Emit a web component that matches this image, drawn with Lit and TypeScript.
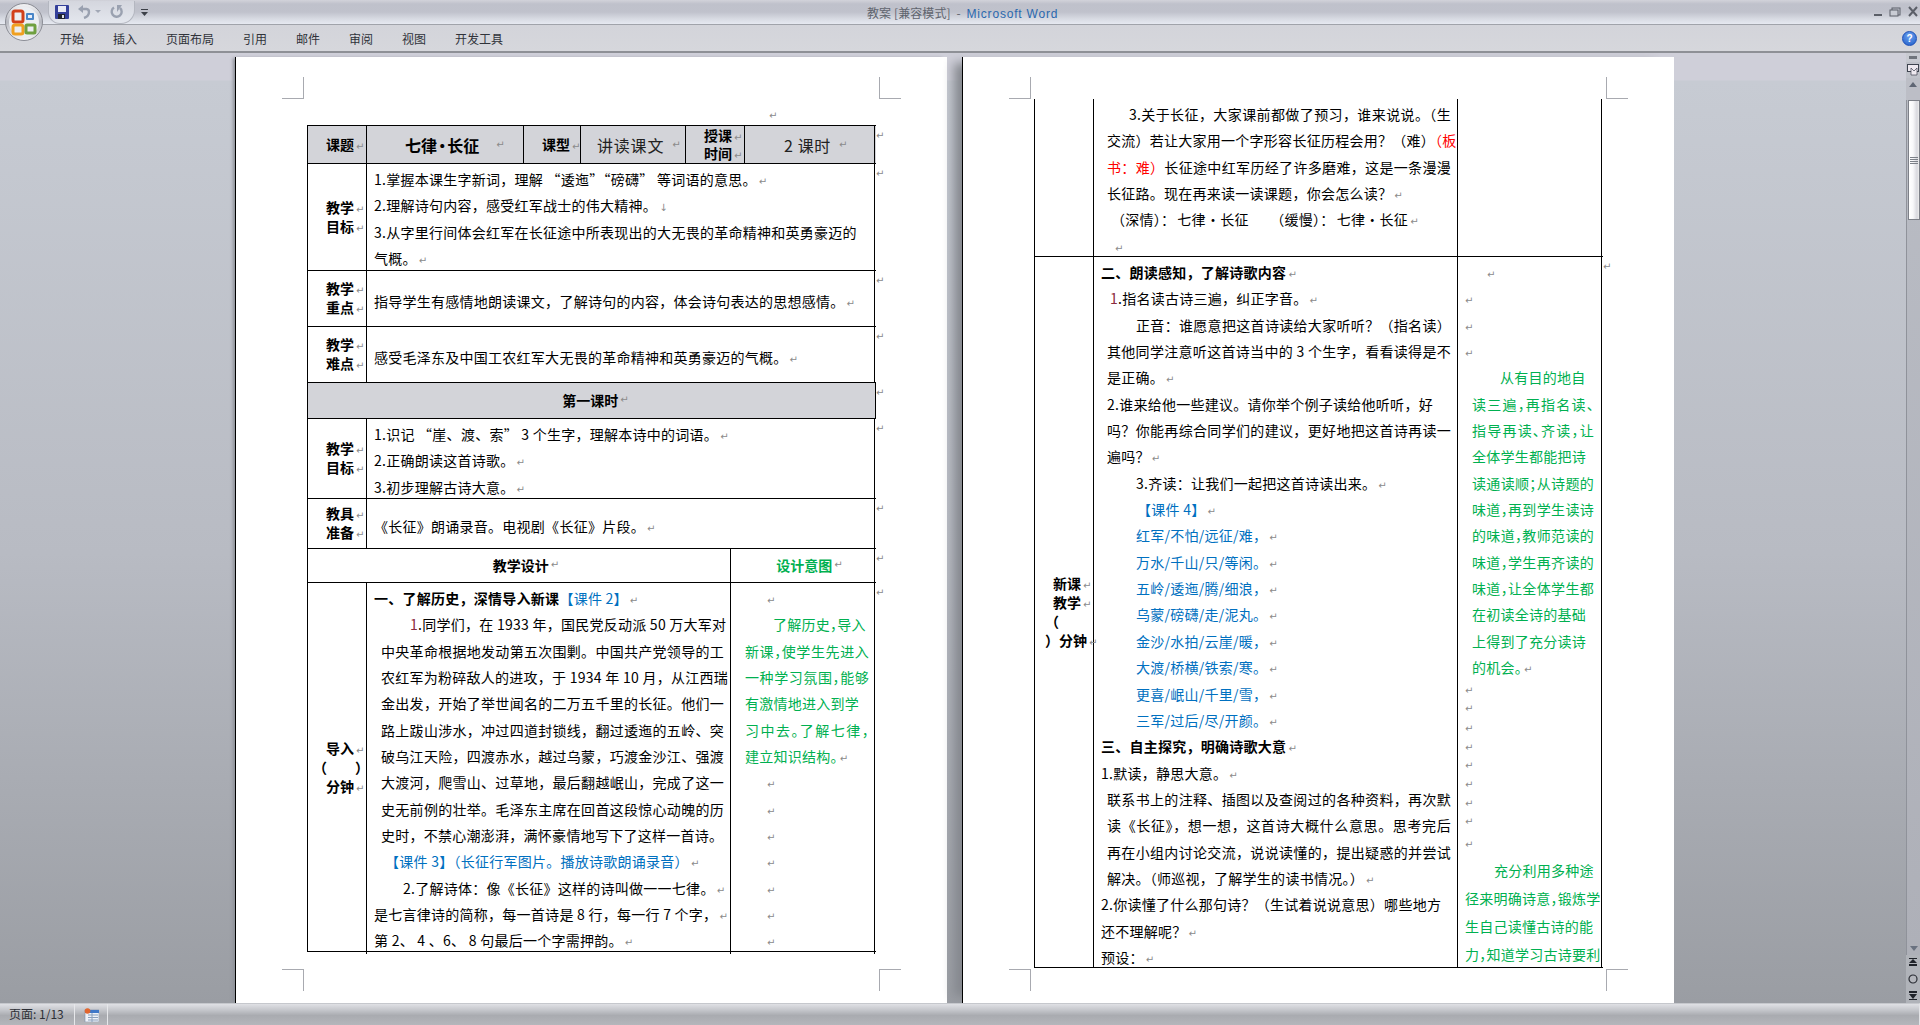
import { LitElement, css, html, nothing, TemplateResult } from "lit";
import { customElement } from "lit/decorators.js";

type Line = {
  t?: unknown;
  x?: number; // left offset inside the cell
  c?: string; // colour class
  j?: boolean; // stretched to the cell's right edge
  m?: boolean; // paragraph mark at the end
  y?: number; // own line height
};

const mark = html`<span class="m">↵</span>`;
const red1 = html`<span class="num">1</span>`;
const blue = (s: string) => html`<span class="blue">${s}</span>`;
const red = (s: string) => html`<span class="red">${s}</span>`;
const poem = html`<span class="poem2">七律 · 长征</span>`;

const rows1Left: Line[] = [
  { t: html`<b>一、了解历史，深情导入新课</b>${blue("【课件 2】")}`, m: true },
  { t: html`${red1}.同学们，在 1933 年，国民党反动派 50 万大军对`, x: 36 },
  { t: "中央革命根据地发动第五次围剿。中国共产党领导的工", x: 7, j: true },
  { t: "农红军为粉碎敌人的进攻，于 1934 年 10 月，从江西瑞", x: 7, j: true },
  { t: "金出发，开始了举世闻名的二万五千里的长征。他们一", x: 7, j: true },
  { t: "路上跋山涉水，冲过四道封锁线，翻过逶迤的五岭、突", x: 7, j: true },
  { t: "破乌江天险，四渡赤水，越过乌蒙，巧渡金沙江、强渡", x: 7, j: true },
  { t: "大渡河，爬雪山、过草地，最后翻越岷山，完成了这一", x: 7, j: true },
  { t: "史无前例的壮举。毛泽东主席在回首这段惊心动魄的历", x: 7, j: true },
  { t: "史时，不禁心潮澎湃，满怀豪情地写下了这样一首诗。", x: 7 },
  { t: "【课件 3】（长征行军图片。播放诗歌朗诵录音）", x: 11, c: "blue", m: true },
  { t: "2.了解诗体：像《长征》这样的诗叫做一一七律。", x: 29, m: true },
  { t: "是七言律诗的简称，每一首诗是 8 行，每一行 7 个字，", m: true },
  { t: "第 2、 4 、6、 8 句最后一个字需押韵。", m: true },
];

const rows1Right: Line[] = [
  { x: 20, m: true },
  { t: "了解历史，导入", x: 28, c: "green" },
  { t: "新课，使学生先进入", c: "green", j: true },
  { t: "一种学习氛围，能够", c: "green", j: true },
  { t: "有激情地进入到学", c: "green" },
  { t: "习中去。了解七律，", c: "green", j: true },
  { t: "建立知识结构。", c: "green", m: true },
  { x: 20, m: true },
  { x: 20, m: true },
  { x: 20, m: true },
  { x: 20, m: true },
  { x: 20, m: true },
  { x: 20, m: true },
  { x: 20, m: true },
];

const rows2Top: Line[] = [
  { t: "3.关于长征，大家课前都做了预习，谁来说说。（生", x: 28, j: true },
  { t: html`交流）若让大家用一个字形容长征历程会用？（难）${red("（板")}`, x: 6, j: true },
  { t: html`${red("书：难）")}长征途中红军历经了许多磨难，这是一条漫漫`, x: 6, j: true },
  { t: "长征路。现在再来读一读课题，你会怎么读？", x: 6, m: true },
  { t: html`（深情）：${poem}　&#8194;（缓慢）：${poem}`, x: 10, m: true },
  { x: 12, m: true },
];

const rows2Left: Line[] = [
  { t: html`<b>二、朗读感知，了解诗歌内容</b>`, m: true },
  { t: html`${red1}.指名读古诗三遍，纠正字音。`, x: 9, m: true },
  { t: "正音：谁愿意把这首诗读给大家听听？（指名读）", x: 35, j: true },
  { t: "其他同学注意听这首诗当中的 3 个生字，看看读得是不", x: 6, j: true },
  { t: "是正确。", x: 6, m: true },
  { t: "2.谁来给他一些建议。请你举个例子读给他听听，好", x: 6 },
  { t: "吗？你能再综合同学们的建议，更好地把这首诗再读一", x: 6, j: true },
  { t: "遍吗？", x: 6, m: true },
  { t: "3.齐读：让我们一起把这首诗读出来。", x: 35, m: true },
  { t: "【课件 4】", x: 36, c: "blue", m: true },
  { t: "红军/不怕/远征/难，", x: 35, c: "blue", m: true },
  { t: "万水/千山/只/等闲。", x: 35, c: "blue", m: true },
  { t: "五岭/逶迤/腾/细浪，", x: 35, c: "blue", m: true },
  { t: "乌蒙/磅礴/走/泥丸。", x: 35, c: "blue", m: true },
  { t: "金沙/水拍/云崖/暖，", x: 35, c: "blue", m: true },
  { t: "大渡/桥横/铁索/寒。", x: 35, c: "blue", m: true },
  { t: "更喜/岷山/千里/雪，", x: 35, c: "blue", m: true },
  { t: "三军/过后/尽/开颜。", x: 35, c: "blue", m: true },
  { t: html`<b>三、自主探究，明确诗歌大意</b>`, m: true },
  { t: "1.默读，静思大意。", m: true },
  { t: "联系书上的注释、插图以及查阅过的各种资料，再次默", x: 6, j: true },
  { t: "读《长征》，想一想，这首诗大概什么意思。思考完后", x: 6, j: true },
  { t: "再在小组内讨论交流，说说读懂的，提出疑惑的并尝试", x: 6, j: true },
  { t: "解决。（师巡视，了解学生的读书情况。）", x: 6, m: true },
  { t: "2.你读懂了什么那句诗？（生试着说说意思）哪些地方" },
  { t: "还不理解呢？", m: true },
  { t: "预设：", m: true },
];

const rows2Right: Line[] = [
  { x: 23, m: true },
  { x: 1, m: true },
  { x: 1, m: true },
  { x: 1, m: true },
  { t: "从有目的地自", x: 38, c: "green" },
  { t: "读三遍，再指名读、", x: 10, c: "green", j: true },
  { t: "指导再读、齐读，让", x: 10, c: "green", j: true },
  { t: "全体学生都能把诗", x: 10, c: "green" },
  { t: "读通读顺；从诗题的", x: 10, c: "green", j: true },
  { t: "味道，再到学生读诗", x: 10, c: "green", j: true },
  { t: "的味道，教师范读的", x: 10, c: "green", j: true },
  { t: "味道，学生再齐读的", x: 10, c: "green", j: true },
  { t: "味道，让全体学生都", x: 10, c: "green", j: true },
  { t: "在初读全诗的基础", x: 10, c: "green" },
  { t: "上得到了充分读诗", x: 10, c: "green" },
  { t: "的机会。", x: 10, c: "green", m: true },
  { x: 1, m: true, y: 15 },
  { x: 1, m: true, y: 21 },
  { x: 1, m: true, y: 19 },
  { x: 1, m: true, y: 18 },
  { x: 1, m: true, y: 19 },
  { x: 1, m: true, y: 19 },
  { x: 1, m: true, y: 18 },
  { x: 1, m: true, y: 19 },
  { x: 1, m: true, y: 27 },
  { t: "充分利用多种途", x: 32, c: "green", y: 28 },
  { t: "径来明确诗意，锻炼学", x: 3, c: "green", y: 28 },
  { t: "生自己读懂古诗的能", x: 3, c: "green", y: 28 },
  { t: "力，知道学习古诗要利", x: 3, c: "green", y: 28 },
];

function lines(items: Line[]): TemplateResult {
  return html`${items.map(
    (l) => html`<div
      class="ln ${l.c ?? ""} ${l.j ? "j" : ""}"
      style="padding-left:${l.x ?? 0}px;${l.y ? `line-height:${l.y}px;height:${l.y}px` : ""}"
    >${l.t ?? nothing}${l.m ? mark : nothing}</div>`
  )}`;
}

@customElement("app-root")
export class AppRoot extends LitElement {
  private titleBar() {
    return html`
      <div class="titlebar">
        <div class="qat">
          <svg width="14" height="14" viewBox="0 0 14 14">
            <rect width="14" height="14" rx="1" fill="#34409a" />
            <rect x="3" y="1" width="8" height="6" fill="#e9ebf5" />
            <rect x="3" y="9" width="7" height="5" fill="#20242e" />
            <rect x="7" y="10" width="2" height="3" fill="#dfe2ea" />
          </svg>
          <svg class="undo" width="13" height="14" viewBox="0 0 13 14">
            <path d="M0 4l5-4v8z" fill="#9aa1b0" />
            <path d="M4 4h4.500a3 3 0 0 1 2.500 3c0 3-2 5-5 6" fill="none" stroke="#9aa1b0" stroke-width="2.400" />
          </svg>
          <span class="qat-drop"></span>
          <svg class="redo" width="13" height="14" viewBox="0 0 13 14">
            <path d="M4 2.500a5 5 0 1 0 6 .5" fill="none" stroke="#9aa1b0" stroke-width="2.400" />
            <path d="M7 0v7l5-7z" fill="#9aa1b0" />
          </svg>
        </div>
        <svg class="customize" width="7" height="7" viewBox="0 0 7 7">
          <rect y="0" width="7" height="1" fill="#3c4048" />
          <path d="M0 3h7L3.500 7z" fill="#3c4048" />
        </svg>
        <div class="caption">教案 [兼容模式] <span class="spacer">-</span> <span class="app">Microsoft Word</span></div>
        <div class="winbtns">
          <svg width="46" height="12" viewBox="0 0 46 12">
            <rect x="1" y="8" width="8" height="2" fill="#5b5f68" />
            <rect x="19" y="2" width="8" height="7" fill="none" stroke="#5b5f68" />
            <rect x="17" y="4" width="8" height="6" fill="#c9ccd4" stroke="#5b5f68" />
            <path d="M36 1l8 9M44 1l-8 9" stroke="#5b5f68" stroke-width="2" fill="none" />
          </svg>
        </div>
      </div>
    `;
  }

  private ribbon() {
    const tabs = ["开始", "插入", "页面布局", "引用", "邮件", "审阅", "视图", "开发工具"];
    return html`
      <div class="ribbon">
        ${tabs.map((t) => html`<span class="tab">${t}</span>`)}
        <span class="help">?</span>
      </div>
      <svg class="orb" width="38" height="38" viewBox="0 0 38 38">
        <defs>
          <linearGradient id="orbg" x1="0" y1="0" x2="0" y2="1">
            <stop offset="0" stop-color="#f4f4f6" />
            <stop offset=".5" stop-color="#b8bac2" />
            <stop offset="1" stop-color="#f6f6f8" />
          </linearGradient>
        </defs>
        <circle cx="19" cy="19" r="18.500" fill="url(#orbg)" stroke="#8a8c94" />
        <circle cx="19" cy="19" r="15" fill="#eceef2" />
        <rect x="8" y="8" width="10" height="11" rx="2" fill="none" stroke="#d2401a" stroke-width="3" />
        <rect x="21" y="10" width="8" height="7" rx="1" fill="#4a86c8" />
        <rect x="8" y="22" width="10" height="9" rx="2" fill="none" stroke="#f0a020" stroke-width="3" />
        <rect x="21" y="22" width="9" height="8" rx="1" fill="none" stroke="#6fa040" stroke-width="3" />
        <rect x="23" y="12" width="4" height="3" fill="#e8eef8" />
      </svg>
    `;
  }

  private scrollbar() {
    return html`
      <div class="sbar">
        <span class="sb-split"></span>
        <span class="sb-view">
          <svg width="12" height="12" viewBox="0 0 12 12">
            <rect x=".5" y=".5" width="11" height="7" fill="#eee9f0" stroke="#3f4450" />
            <path d="M4 4l3 3 3-3v7H4z" fill="#eee9f0" stroke="#3f4450" stroke-width=".7" />
          </svg>
        </span>
        <span class="sb-up"></span>
        <div class="sb-track">
          <div class="sb-thumb"><span class="grip"></span></div>
          <span class="sb-down"></span>
        </div>
        <div class="sb-nav">
          <svg width="8" height="9" viewBox="0 0 8 9"><path d="M0 0h8v1H0zM4 1l4 4H0zM0 6h8v2H0z" fill="#20232a" /></svg>
          <svg width="10" height="10" viewBox="0 0 10 10"><circle cx="5" cy="5" r="4" fill="#b4b6bc" stroke="#2a2d34" stroke-width="1.2" /></svg>
          <svg width="8" height="9" viewBox="0 0 8 9"><path d="M0 0h8v2H0zM0 3h8L4 8zM0 8h8v1H0z" fill="#20232a" /></svg>
        </div>
      </div>
    `;
  }

  private cornerMarks(cls: string) {
    return html`<div class="marks ${cls}"><i></i><i></i></div>`;
  }

  private pageOne() {
    return html`
      <div class="page first">
        ${this.cornerMarks("top")}
        <div class="lead">${mark}</div>
        <div class="tbl">
          <div class="tr r1 gray" style="height:38px">
            <div class="td lab"><span>课题${mark}</span></div>
            <div class="td title16"><b class="poem">七律 · 长征</b>${mark}</div>
            <div class="td lab"><span>课型${mark}</span></div>
            <div class="td big">讲读课文 ${mark}</div>
            <div class="td lab time"><span>授课${mark}</span><span>时间${mark}</span></div>
            <div class="td big mid">2 课时 ${mark}</div>
            <span class="rm">↵</span>
          </div>
          <div class="tr r2" style="height:107px">
            <div class="td lab"><span>教学${mark}</span><span>目标${mark}</span></div>
            <div class="td txt pt">
              ${lines([
                { t: "1.掌握本课生字新词，理解 “逶迤”“磅礴” 等词语的意思。", m: true },
                { t: html`2.理解诗句内容，感受红军战士的伟大精神。<span class="m">↓</span>` },
                { t: "3.从字里行间体会红军在长征途中所表现出的大无畏的革命精神和英勇豪迈的" },
                { t: "气概。", m: true },
              ])}
            </div>
            <span class="rm">↵</span>
          </div>
          <div class="tr r2" style="height:56px">
            <div class="td lab"><span>教学${mark}</span><span>重点${mark}</span></div>
            <div class="td txt one">${lines([{ t: "指导学生有感情地朗读课文，了解诗句的内容，体会诗句表达的思想感情。", m: true }])}</div>
            <span class="rm">↵</span>
          </div>
          <div class="tr r2" style="height:56px">
            <div class="td lab"><span>教学${mark}</span><span>难点${mark}</span></div>
            <div class="td txt one">${lines([{ t: "感受毛泽东及中国工农红军大无畏的革命精神和英勇豪迈的气概。", m: true }])}</div>
            <span class="rm">↵</span>
          </div>
          <div class="tr gray" style="height:36px">
            <div class="td center lesson"><b>第一课时</b>${mark}</div>
            <span class="rm">↵</span>
          </div>
          <div class="tr r2" style="height:80px">
            <div class="td lab"><span>教学${mark}</span><span>目标${mark}</span></div>
            <div class="td txt pt">
              ${lines([
                { t: "1.识记 “崖、渡、索” 3 个生字，理解本诗中的词语。", m: true },
                { t: "2.正确朗读这首诗歌。", m: true },
                { t: "3.初步理解古诗大意。", m: true },
              ])}
            </div>
            <span class="rm">↵</span>
          </div>
          <div class="tr r2" style="height:50px">
            <div class="td lab"><span>教具${mark}</span><span>准备${mark}</span></div>
            <div class="td txt one">${lines([{ t: "《长征》朗诵录音。电视剧《长征》片段。", m: true }])}</div>
            <span class="rm">↵</span>
          </div>
          <div class="tr r3" style="height:34px">
            <div class="td center design"><b>教学设计</b>${mark}</div>
            <div class="td center design greenhead"><b>设计意图</b>${mark}</div>
            <span class="rm">↵</span>
          </div>
          <div class="tr r4" style="height:369px">
            <div class="td lab">
              <span>导入${mark}</span>
              <span class="paren">（　　）</span>
              <span>分钟${mark}</span>
            </div>
            <div class="td txt pt">${lines(rows1Left)}</div>
            <div class="td txt pt side">${lines(rows1Right)}</div>
            <span class="rm">↵</span>
          </div>
        </div>
        ${this.cornerMarks("bottom b1")}
      </div>
    `;
  }

  private pageTwo() {
    return html`
      <div class="page">
        ${this.cornerMarks("top")}
        <div class="lead tight"></div>
        <div class="tbl notop">
          <div class="tr r4" style="height:158px">
            <div class="td"></div>
            <div class="td txt pt">${lines(rows2Top)}</div>
            <div class="td"></div>
          </div>
          <div class="tr r4" style="height:711px">
            <div class="td lab">
              <span>新课${mark}</span>
              <span>教学${mark}</span>
              <span class="paren2">（</span>
              <span class="paren2">）分钟${mark}</span>
            </div>
            <div class="td txt pt">${lines(rows2Left)}</div>
            <div class="td txt pt side2">${lines(rows2Right)}</div>
            <span class="rm">↵</span>
          </div>
        </div>
        ${this.cornerMarks("bottom b2")}
      </div>
    `;
  }

  render() {
    return html`
      ${this.titleBar()} ${this.ribbon()}
      <div class="work">
        <div class="pages">${this.pageOne()} ${this.pageTwo()}</div>
        ${this.scrollbar()}
      </div>
      <div class="status">
        <span class="st-page">页面: 1/13</span>
        <span class="st-icon">
          <svg width="15" height="14" viewBox="0 0 15 14">
            <rect x="1" y="2" width="14" height="12" fill="#eef2f8" stroke="#7d8ea8" stroke-width=".6" />
            <rect x="1" y="2" width="14" height="3" fill="#3f78c8" />
            <path d="M4 7h10M4 9.500h10M4 12h10M8 5v9" stroke="#8aa0bc" stroke-width="1" />
            <circle cx="3.500" cy="3" r="2.800" fill="#e2662e" />
          </svg>
        </span>
      </div>
    `;
  }

  static styles = css`
    :host {
      display: flex;
      flex-direction: column;
      width: 1920px;
      height: 1025px;
      overflow: hidden;
      position: relative;
      font-family: "Noto Sans CJK SC", "Liberation Sans", sans-serif;
      font-size: 14px;
      color: #000;
      background: #c7cbd3;
    }

    .titlebar {
      height: 24px;
      flex: none;
      display: flex;
      align-items: center;
      padding-left: 48px;
      background: linear-gradient(180deg, #d2d3da 0, #bfc1cb 4px, #c0c2cc 12px, #d8dbe3 19px, #e6e9f1 24px);
      border-bottom: 1px solid #a0a3aa;
      font-size: 12px;
    }

    .qat {
      width: 87px;
      height: 23px;
      box-sizing: border-box;
      display: flex;
      align-items: center;
      padding-left: 6px;
      background: linear-gradient(180deg, #d4d6de, #e4e7ee);
      border: 1px solid #b4b7c0;
      border-top: none;
      border-radius: 0 0 14px 12px;
      flex: none;
    }
    .undo {
      margin-left: 9px;
    }
    .redo {
      margin-left: 9px;
    }
    .qat-drop {
      border-left: 3px solid transparent;
      border-right: 3px solid transparent;
      border-top: 3px solid #a2a8b6;
      margin-left: 4px;
    }
    .customize {
      margin-left: 6px;
      flex: none;
    }
    .caption {
      margin-left: 719px;
      color: #5f646e;
      white-space: nowrap;
      letter-spacing: 0.1px;
    }
    .spacer {
      margin: 0 3px;
    }
    .app {
      color: #2a68ae;
      font-family: "Liberation Sans", sans-serif;
      letter-spacing: 0.8px;
    }
    .winbtns {
      margin-left: auto;
      margin-right: 1px;
      display: flex;
    }

    .ribbon {
      height: 26px;
      flex: none;
      display: flex;
      align-items: center;
      padding: 0 3px 0 60px;
      background: linear-gradient(180deg, #d3d4da, #d6d7dc);
      border-bottom: 2px solid #8e9096;
      font-size: 12px;
      color: #30333a;
    }
    .tab {
      margin-right: 29px;
      white-space: nowrap;
    }
    .help {
      margin-left: auto;
      width: 13px;
      height: 13px;
      border-radius: 50%;
      border: 1px solid #1c4fb8;
      background: radial-gradient(circle at 50% 30%, #6fa4f0, #1f5cc8);
      color: #fff;
      font: 700 10px/13px "Liberation Sans", sans-serif;
      text-align: center;
    }
    .orb {
      position: absolute;
      left: 5px;
      top: 3px;
    }

    .work {
      height: 950px;
      flex: none;
      display: flex;
      overflow: hidden;
      background: linear-gradient(180deg, #cfcfd9 0, #cfcfd9 27px, #c7cbd3 28px, #b8bbc3 500px, #9a9da3 950px);
    }
    .pages {
      flex: 1;
      display: flex;
      gap: 16px;
      padding: 4px 0 0 236px;
      min-width: 0;
    }
    .page {
      width: 711px;
      height: 946px;
      flex: none;
      background: #fff;
      overflow: hidden;
      box-shadow: -1px 0 0 #000, -4px 0 3px -1px #8e9198;
      position: relative;
    }
    .page + .page {
      box-shadow: -1px 0 0 #000, -15px 0 10px -6px #85888e;
    }

    .marks {
      display: flex;
      justify-content: space-between;
      height: 21px;
      margin: 20px 46px 0;
    }
    .marks i {
      width: 21px;
      height: 21px;
      border: 0 solid #a8aab0;
    }
    .marks.top i:first-child {
      border-width: 0 1px 1px 0;
    }
    .marks.top i:last-child {
      border-width: 0 0 1px 1px;
    }
    .marks.bottom i:first-child {
      border-width: 1px 1px 0 0;
    }
    .marks.bottom i:last-child {
      border-width: 1px 0 0 1px;
    }
    .marks.b1 {
      margin-top: 17px;
    }
    .marks.b2 {
      margin-top: 1px;
    }

    .lead {
      height: 27px;
      padding: 5px 0 0 531px;
      box-sizing: border-box;
    }
    .lead.tight {
      height: 1px;
      padding: 0;
    }

    .tbl {
      margin-left: 71px;
      width: 568px;
      border: solid #000;
      border-width: 1px 0 0 1px;
    }
    .tbl.notop {
      border-top-width: 0;
    }
    .tr {
      display: grid;
      box-sizing: border-box;
      border-bottom: 1px solid #000;
      position: relative;
    }
    .r1 {
      grid-template-columns: 59px 157px 57px 105px 59px 130px;
    }
    .r2 {
      grid-template-columns: 59px 508px;
    }
    .r3 {
      grid-template-columns: 423px 144px;
    }
    .r4 {
      grid-template-columns: 59px 364px 144px;
    }
    .gray {
      background: #d3d4d9;
    }
    .td {
      border-right: 1px solid #000;
      min-width: 0;
      white-space: nowrap;
      overflow: hidden;
    }
    .r4 .td:last-of-type {
      overflow: visible;
    }

    .lab {
      display: flex;
      flex-direction: column;
      justify-content: center;
      box-sizing: border-box;
      padding: 0 0 1px 18px;
      font-weight: 700;
      line-height: 19px;
      overflow: visible;
    }
    .lab .m {
      font-weight: 400;
    }
    .lab.time {
      padding-left: 18px;
      line-height: 18px;
    }
    .paren {
      margin-left: -13px;
    }
    .paren2 {
      margin-left: -8px;
    }

    .poem {
      font-feature-settings: "halt";
      word-spacing: -2.5px;
    }
    .poem2 {
      margin-left: 2px;
      word-spacing: -3.3px;
    }
    .title16 {
      display: flex;
      align-items: center;
      padding-left: 38px;
      font-size: 16px;
    }
    .title16 .m {
      margin-left: 17px;
    }
    .big {
      display: flex;
      align-items: center;
      padding-left: 16px;
      font-size: 16px;
      letter-spacing: 0.8px;
      color: #222;
    }
    .big .m {
      margin-left: 8px;
    }
    .big.mid {
      padding-left: 39px;
      letter-spacing: 0.6px;
    }
    .center {
      display: flex;
      align-items: center;
      justify-content: center;
      box-sizing: border-box;
      padding-bottom: 2px;
    }
    .lesson {
      padding-left: 8px;
    }
    .design {
      padding-left: 14px;
    }
    .greenhead {
      color: #00b050;
    }

    .txt {
      padding: 0 6px 0 7px;
      letter-spacing: 0.26px;
    }
    .pt {
      padding-top: 2px;
    }
    .one {
      display: flex;
      align-items: center;
      padding-top: 5px;
      box-sizing: border-box;
    }
    .side {
      padding-left: 14px;
      padding-right: 5px;
    }
    .side2 {
      padding-left: 4px;
      padding-right: 7px;
    }

    .ln {
      height: 26.35px;
      line-height: 26.35px;
      white-space: nowrap;
      box-sizing: border-box;
    }
    .j {
      text-align: justify;
      text-align-last: justify;
      text-justify: inter-character;
    }
    .blue {
      color: #0070c0;
    }
    .red {
      color: #f00;
    }
    .green {
      color: #00b050;
      font-feature-settings: "halt";
    }
    .num {
      color: #8a2a40;
    }
    .m {
      font: 400 10px/1 "DejaVu Sans", sans-serif;
      color: #8a8a8a;
      letter-spacing: 0;
      margin-left: 2px;
    }
    .rm {
      position: absolute;
      left: 100%;
      top: 3px;
      font: 400 10px/14px "DejaVu Sans", sans-serif;
      color: #8a8a8a;
    }

    .sbar {
      width: 14px;
      flex: none;
      display: flex;
      flex-direction: column;
      align-items: center;
      background: #c8cad1;
    }
    .sb-split {
      width: 8px;
      height: 3px;
      margin: 3px 0;
      background: #70747c;
      flex: none;
    }
    .sb-view {
      height: 16px;
      width: 100%;
      flex: none;
      display: flex;
      justify-content: center;
      align-items: center;
      background: #c0c2ca;
    }
    .sb-up {
      height: 22px;
      width: 100%;
      flex: none;
      background: #bcbec6;
      position: relative;
    }
    .sb-up::after {
      content: "";
      position: absolute;
      left: 3px;
      top: 4px;
      border-left: 4px solid transparent;
      border-right: 4px solid transparent;
      border-bottom: 5px solid #5f6674;
    }
    .sb-track {
      flex: 1;
      width: 100%;
      display: flex;
      flex-direction: column;
      align-items: center;
      background: linear-gradient(180deg, #b9bcc4, #aeb0b8);
      border-left: 1px solid #8f929a;
      box-sizing: border-box;
    }
    .sb-thumb {
      height: 120px;
      width: 12px;
      flex: none;
      box-sizing: border-box;
      border: 1px solid #7d8088;
      background: linear-gradient(90deg, #fff 0, #f8f8fa 40%, #d8d8de 80%, #eee 100%);
      display: flex;
      align-items: center;
      justify-content: center;
    }
    .grip {
      width: 8px;
      height: 7px;
      background: repeating-linear-gradient(180deg, #7c8088 0, #7c8088 1px, transparent 1px, transparent 2px);
    }
    .sb-down {
      margin-top: auto;
      margin-bottom: 4px;
      border-left: 4px solid transparent;
      border-right: 4px solid transparent;
      border-top: 5px solid #6a7280;
    }
    .sb-nav {
      height: 48px;
      width: 100%;
      flex: none;
      display: flex;
      flex-direction: column;
      align-items: center;
      justify-content: space-around;
      background: #b0b3b9;
    }

    .status {
      flex: none;
      height: 22px;
      display: flex;
      align-items: stretch;
      box-sizing: border-box;
      border-top: 1px solid #c6c8cd;
      border-right: 1px solid #e2e3e6;
      background: linear-gradient(180deg, #e0e1e5 0, #c3c5ca 30%, #a9abb0 55%, #b4b6bb 100%);
      font-size: 12px;
      color: #2c2f36;
    }
    .st-page {
      width: 75px;
      box-sizing: border-box;
      padding-left: 9px;
      line-height: 20px;
      border-right: 1px solid #e6e7ea;
      white-space: nowrap;
    }
    .st-icon {
      width: 33px;
      box-sizing: border-box;
      display: flex;
      align-items: center;
      justify-content: center;
      border-right: 1px solid #e6e7ea;
    }
  `;
}

declare global {
  interface HTMLElementTagNameMap {
    "app-root": AppRoot;
  }
}
